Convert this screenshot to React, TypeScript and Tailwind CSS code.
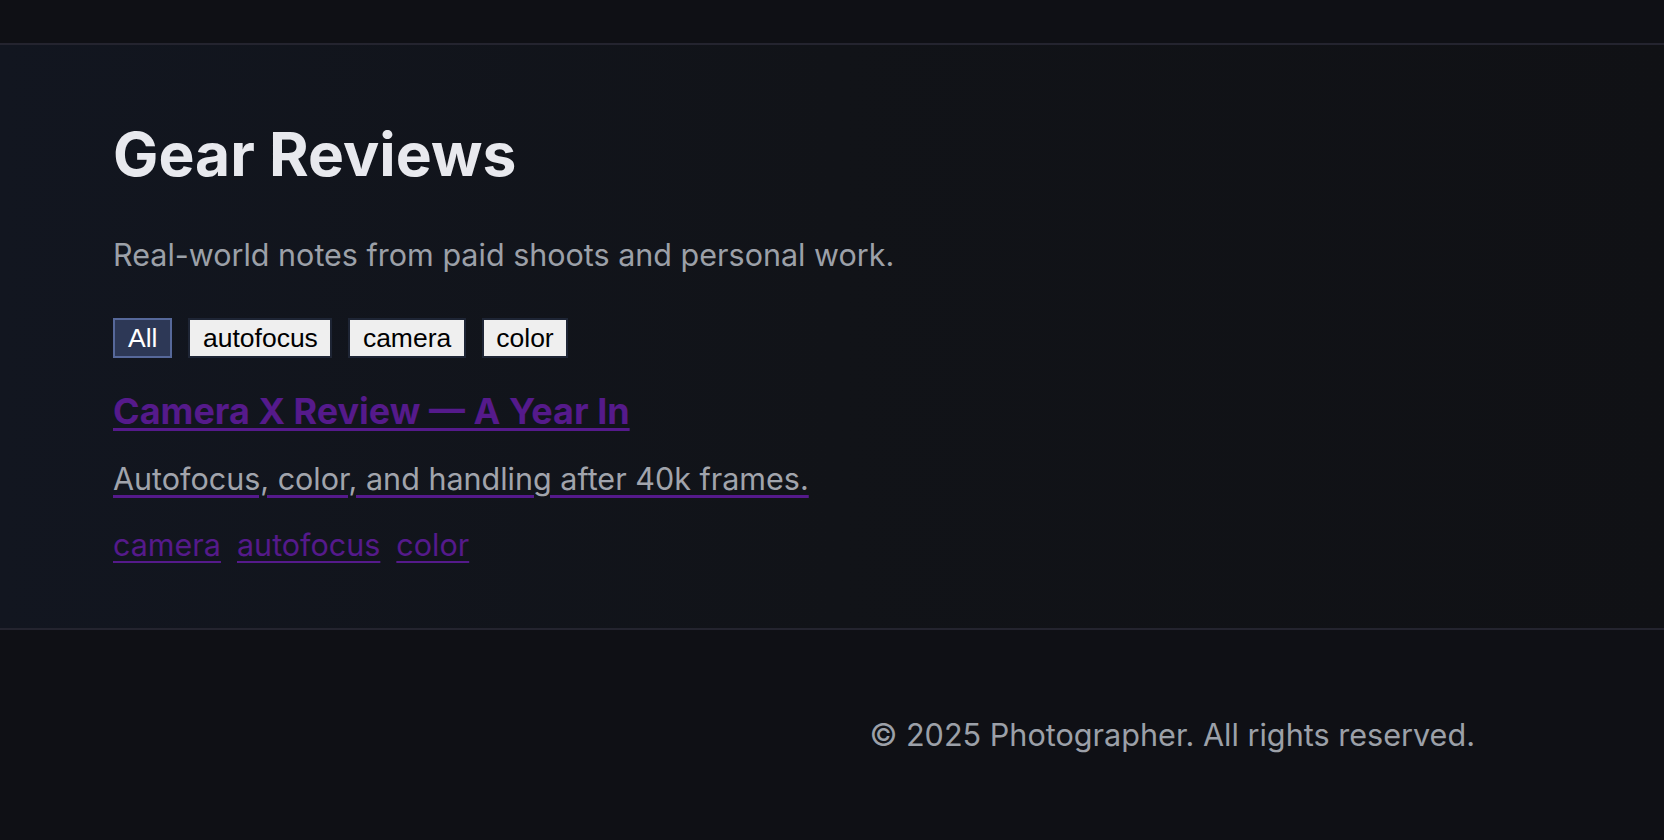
import React from "react";

export default function App() {
  const filters = ["All", "autofocus", "camera", "color"];
  return (
    <div
      className="min-h-[840px] w-full bg-[#0f1015] text-[#e5e7eb]"
      style={{ fontFamily: "Inter, 'Noto Sans', sans-serif" }}
    >
      <header className="h-[45px] border-b-2 border-[#24242f] bg-[#0f1015]" />
      <main className="border-b-2 border-[#24242f] bg-gradient-to-r from-[#121620] via-[#111318] to-[#101115] px-[113px] pt-[73px] pb-[61px]">
        <h1 className="text-[60.5px] font-bold leading-[1.2] text-[#e8e9ee]">Gear Reviews</h1>
        <p className="mt-[43px] text-[30.5px] leading-[1.4] text-[#9ca0a8]">
          Real-world notes from paid shoots and personal work.
        </p>
        <div className="mt-[42px] flex gap-4" style={{ fontFamily: "'Liberation Sans', Arial, sans-serif" }}>
          {filters.map((f, i) => (
            <button
              key={f}
              className={
                i === 0
                  ? "h-[40px] border-2 border-[#56689a] bg-[#2d3856] px-[13px] text-[26.5px] leading-none text-white"
                  : "h-[40px] border-2 border-[#1e2535] bg-[#efefef] px-[12.5px] text-[26.5px] leading-none text-black"
              }
            >
              {f}
            </button>
          ))}
        </div>
        <article className="mt-[28px]">
          <a href="#" className="block text-[36px] font-bold leading-[1.4] text-[#551a8b] underline decoration-[3px] underline-offset-[4px]">
            Camera X Review — A Year In
          </a>
          <a href="#" className="mt-[21px] inline-block text-[#551a8b] underline decoration-[3px] underline-offset-[5px]">
            <span className="text-[30.5px] leading-[1.4] text-[#a1a4ac]">
              Autofocus, color, and handling after 40k frames.
            </span>
          </a>
          <div className="mt-[24px] flex gap-[16px] text-[30.5px] leading-[1.4]">
            {["camera", "autofocus", "color"].map((t) => (
              <a key={t} href="#" className="text-[#551a8b] underline decoration-[2px] underline-offset-[5px]">
                {t}
              </a>
            ))}
          </div>
        </article>
      </main>
      <footer className="flex h-[210px] items-center justify-end pr-[189px]">
        <p className="text-[30.6px] text-[#9ca0a8]">© 2025 Photographer. All rights reserved.</p>
      </footer>
    </div>
  );
}
